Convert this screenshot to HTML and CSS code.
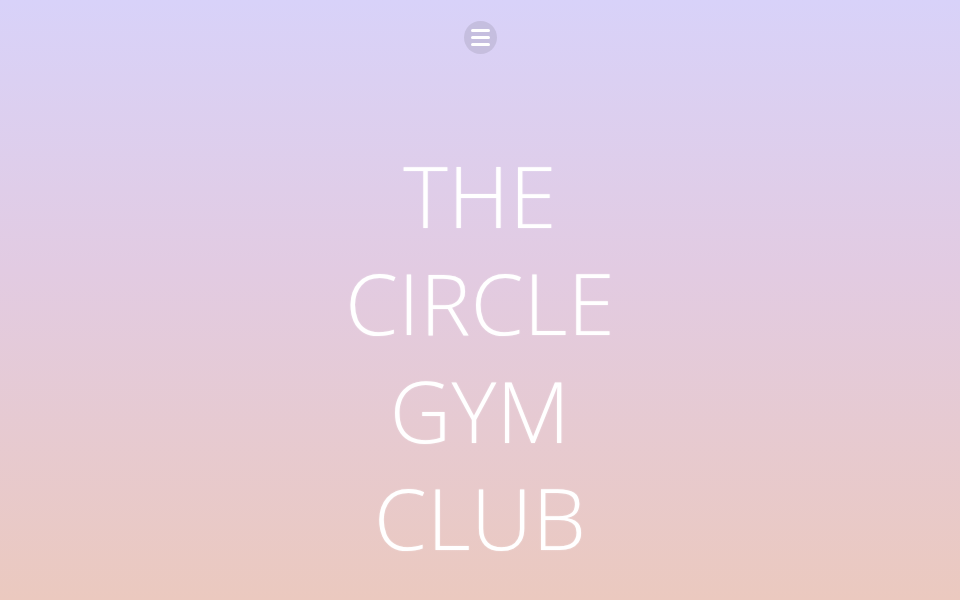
FILE: index.html
```html
<!DOCTYPE html>
<html lang="en">
<head>
<meta charset="utf-8">
<title>The Circle Gym Club</title>
<link rel="stylesheet" href="styles.css">
</head>
<body>
<div class="page">
  <header class="top">
    <button class="menu" aria-label="Menu">
      <span class="bar"></span><span class="bar"></span><span class="bar"></span>
    </button>
  </header>
  <main class="hero">
    <h1 class="title">THE<br>CIRCLE<br>GYM<br>CLUB</h1>
  </main>
</div>
</body>
</html>
```
FILE: styles.css
```css
html, body {
  margin: 0;
  padding: 0;
  height: 100%;
}
body {
  background: linear-gradient(to bottom, #d8d2f9 0%, #e2cbe2 45%, #ebc9bf 100%);
  font-family: "Open Sans", "Liberation Sans", sans-serif;
  overflow: hidden;
}
.page {
  height: 600px;
  display: flex;
  flex-direction: column;
  align-items: center;
}
.top {
  padding-top: 21px;
  display: flex;
  justify-content: center;
}
.menu {
  width: 33px;
  height: 33px;
  border-radius: 50%;
  border: none;
  padding: 0;
  background: rgba(178, 172, 200, 0.5);
  display: flex;
  flex-direction: column;
  align-items: center;
  justify-content: center;
  gap: 4px;
}
.bar {
  display: block;
  width: 19px;
  height: 3px;
  border-radius: 1.5px;
  background: #ffffff;
}
.hero {
  padding-top: 88px;
  text-align: center;
}
.title {
  margin: 0;
  font-weight: 300;
  font-size: 85px;
  line-height: 107.3px;
  color: #ffffff;
  letter-spacing: 0.3px;
  text-shadow: 0 0 2px rgba(255, 255, 255, 0.4);
}
```
